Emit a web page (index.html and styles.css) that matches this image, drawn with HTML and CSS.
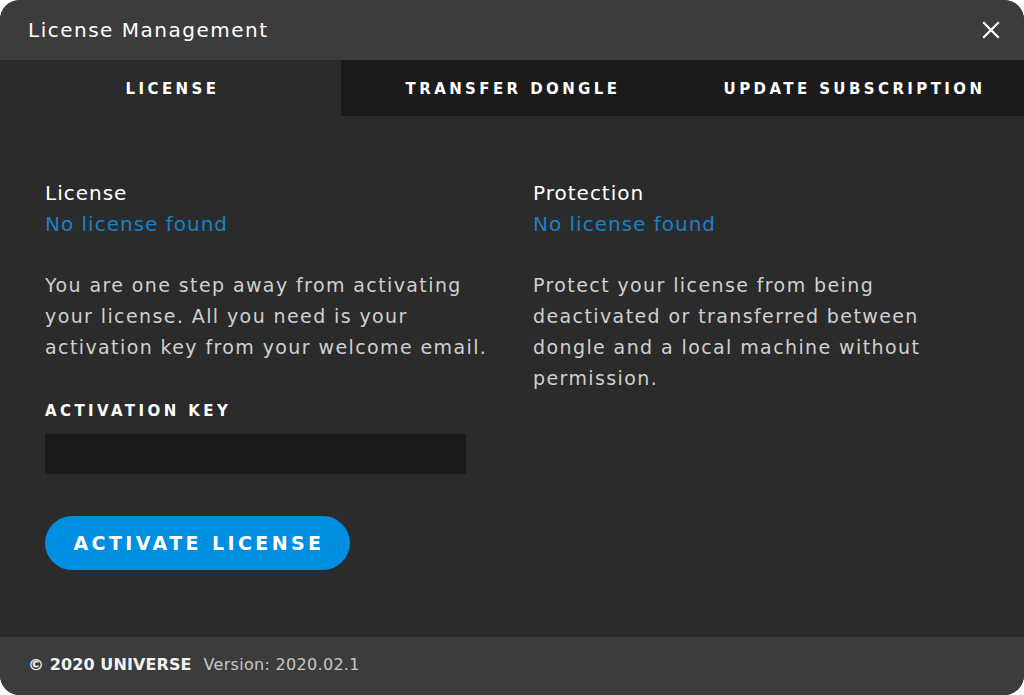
FILE: index.html
```html
<!DOCTYPE html>
<html>
<head>
<meta charset="utf-8">
<link rel="stylesheet" href="styles.css">
</head>
<body>
<div class="window">
  <header class="titlebar">
    <span class="title">License Management</span>
    <svg class="close" width="18" height="18" viewBox="0 0 18 18"><path d="M2 2 L16 16 M16 2 L2 16" stroke="#ffffff" stroke-width="2.2" stroke-linecap="square"/></svg>
  </header>
  <nav class="tabs">
    <div class="tab active">LICENSE</div>
    <div class="tab">TRANSFER DONGLE</div>
    <div class="tab">UPDATE SUBSCRIPTION</div>
  </nav>
  <main class="content">
    <section class="col">
      <h2 class="heading">License</h2>
      <div class="status">No license found</div>
      <p class="desc">You are one step away from activating<br>your license. All you need is your<br>activation key from your welcome email.</p>
      <label class="label">ACTIVATION KEY</label>
      <div class="input"></div>
      <button class="btn">ACTIVATE LICENSE</button>
    </section>
    <section class="col">
      <h2 class="heading">Protection</h2>
      <div class="status">No license found</div>
      <p class="desc">Protect your license from being<br>deactivated or transferred between<br>dongle and a local machine without<br>permission.</p>
    </section>
  </main>
  <footer class="footer">
    <span class="copy">© 2020 UNIVERSE</span>
    <span class="version">Version: 2020.02.1</span>
  </footer>
</div>
</body>
</html>
```
FILE: styles.css
```css
*, *::before, *::after { box-sizing: border-box; }
html, body {
  margin: 0;
  padding: 0;
  background: #ffffff;
}
body {
  font-family: "DejaVu Sans", "Noto Sans", sans-serif;
  -webkit-font-smoothing: antialiased;
}
.window {
  width: 1024px;
  height: 695px;
  border-radius: 20px;
  overflow: hidden;
  background: #2b2b2b;
  display: flex;
  flex-direction: column;
}
.titlebar {
  height: 60px;
  background: #3c3c3c;
  display: flex;
  align-items: center;
  justify-content: space-between;
  padding: 0 24px 0 28px;
  flex: none;
}
.title {
  color: #ffffff;
  font-size: 20px;
  letter-spacing: 1.5px;
}
.close { display: block; }
.tabs {
  display: grid;
  grid-template-columns: 341px 344px 339px;
  height: 56px;
  background: #1b1b1b;
  flex: none;
}
.tab {
  display: flex;
  align-items: center;
  justify-content: center;
  color: #ffffff;
  font-weight: bold;
  font-size: 15px;
  letter-spacing: 3.4px;
  padding-top: 1px;
}
.tab.active { background: #2b2b2b; padding-left: 4px; }
.content {
  flex: 1;
  display: grid;
  grid-template-columns: 488px 1fr;
  padding: 66px 0 0 45px;
}
.col { display: flex; flex-direction: column; align-items: flex-start; }
.heading {
  margin: 0;
  color: #ffffff;
  font-weight: normal;
  font-size: 20px;
  line-height: 24px;
  letter-spacing: 1px;
  position: relative;
  top: -1px;
}
.status {
  color: #1b80c4;
  font-size: 20px;
  line-height: 24px;
  margin-top: 6px;
  letter-spacing: 1px;
}
.desc {
  margin: 34px 0 0 0;
  color: #d0d0d0;
  font-size: 19px;
  line-height: 31px;
  letter-spacing: 1.4px;
  white-space: nowrap;
}
.label {
  margin-top: 38px;
  color: #ffffff;
  font-weight: bold;
  font-size: 15px;
  letter-spacing: 3.4px;
  line-height: 20px;
}
.input {
  margin-top: 13px;
  width: 421px;
  height: 40px;
  background: #1b1b1b;
}
.btn {
  margin-top: 42px;
  width: 305px;
  height: 54px;
  border: none;
  border-radius: 27px;
  background: #008ee0;
  color: #ffffff;
  font-family: inherit;
  font-weight: bold;
  font-size: 19px;
  letter-spacing: 3.4px;
  padding: 0 0 0 3px;
}
.footer {
  height: 58px;
  background: #3c3c3c;
  display: flex;
  align-items: center;
  padding: 0 28px 4px;
  gap: 12px;
  flex: none;
  font-size: 16px;
}
.copy { color: #f2f2f2; font-weight: bold; letter-spacing: 0.1px; }
.version { color: #c8c8c8; letter-spacing: 0.3px; }
```
